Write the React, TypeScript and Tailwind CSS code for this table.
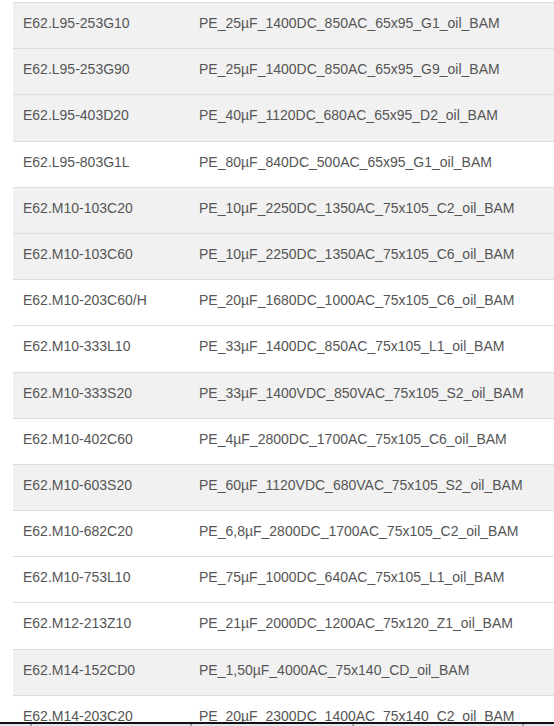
const rows: { code: string; desc: string; shaded: boolean }[] = [
  { code: "E62.L95-253G10", desc: "PE_25µF_1400DC_850AC_65x95_G1_oil_BAM", shaded: true },
  { code: "E62.L95-253G90", desc: "PE_25µF_1400DC_850AC_65x95_G9_oil_BAM", shaded: true },
  { code: "E62.L95-403D20", desc: "PE_40µF_1120DC_680AC_65x95_D2_oil_BAM", shaded: true },
  { code: "E62.L95-803G1L", desc: "PE_80µF_840DC_500AC_65x95_G1_oil_BAM", shaded: false },
  { code: "E62.M10-103C20", desc: "PE_10µF_2250DC_1350AC_75x105_C2_oil_BAM", shaded: true },
  { code: "E62.M10-103C60", desc: "PE_10µF_2250DC_1350AC_75x105_C6_oil_BAM", shaded: true },
  { code: "E62.M10-203C60/H", desc: "PE_20µF_1680DC_1000AC_75x105_C6_oil_BAM", shaded: false },
  { code: "E62.M10-333L10", desc: "PE_33µF_1400DC_850AC_75x105_L1_oil_BAM", shaded: false },
  { code: "E62.M10-333S20", desc: "PE_33µF_1400VDC_850VAC_75x105_S2_oil_BAM", shaded: true },
  { code: "E62.M10-402C60", desc: "PE_4µF_2800DC_1700AC_75x105_C6_oil_BAM", shaded: false },
  { code: "E62.M10-603S20", desc: "PE_60µF_1120VDC_680VAC_75x105_S2_oil_BAM", shaded: true },
  { code: "E62.M10-682C20", desc: "PE_6,8µF_2800DC_1700AC_75x105_C2_oil_BAM", shaded: false },
  { code: "E62.M10-753L10", desc: "PE_75µF_1000DC_640AC_75x105_L1_oil_BAM", shaded: false },
  { code: "E62.M12-213Z10", desc: "PE_21µF_2000DC_1200AC_75x120_Z1_oil_BAM", shaded: false },
  { code: "E62.M14-152CD0", desc: "PE_1,50µF_4000AC_75x140_CD_oil_BAM", shaded: true },
  { code: "E62.M14-203C20", desc: "PE_20µF_2300DC_1400AC_75x140_C2_oil_BAM", shaded: false },
];

export default function App() {
  return (
    <div className="relative w-[554px] h-[726px] overflow-hidden bg-white font-['Liberation_Sans',Arial,sans-serif] text-[14px] text-[#555555]">
      {/* Tabelle */}
      <div className="ml-[13px] pt-[2px]">
        {rows.map((r) => (
          <div
            key={r.code}
            className={`flex border-t border-[#dddddd] h-[46.2px] leading-[21.2px] ${r.shaded ? "bg-[#f1f1f1]" : "bg-white"}`}
          >
            <div className="w-[176px] shrink-0 pl-[10px] pt-[10px] whitespace-nowrap">{r.code}</div>
            <div className="flex-1 pl-[10px] pt-[10px] whitespace-nowrap">{r.desc}</div>
          </div>
        ))}
      </div>

      {/* unterer Rand (Fensterleiste) */}
      <div className="absolute left-0 right-0 top-[722px] h-[4px] flex flex-col">
        <div className="h-[2px] bg-[#111111]" />
        <div className="h-[2px] bg-[#dfe5ec] flex">
          <div className="w-[30px]" />
          <div className="w-[2px] bg-[#9aa4b0]" />
          <div className="w-[158px]" />
          <div className="w-[2px] bg-[#9aa4b0]" />
          <div className="w-[160px]" />
          <div className="w-[2px] bg-[#9aa4b0]" />
          <div className="w-[168px]" />
          <div className="w-[2px] bg-[#9aa4b0]" />
        </div>
      </div>
    </div>
  );
}
